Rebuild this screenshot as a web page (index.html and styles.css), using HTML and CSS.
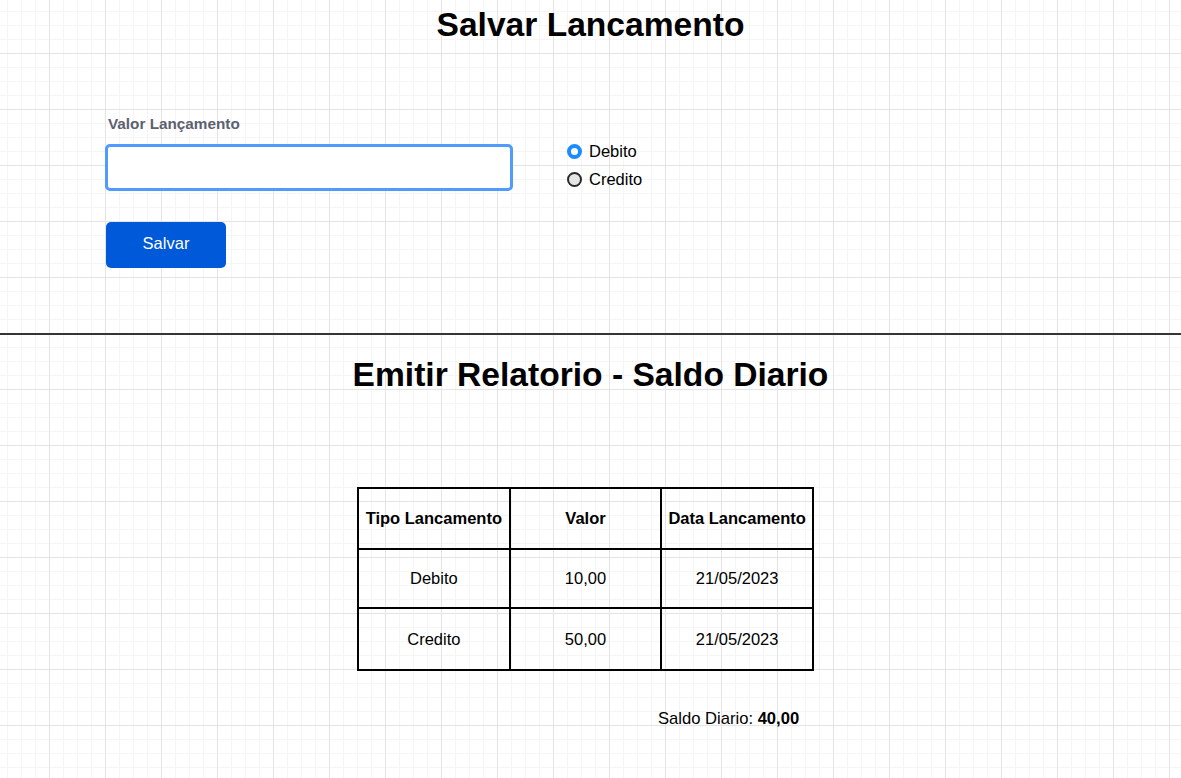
FILE: index.html
```html
<!DOCTYPE html>
<html lang="pt-BR">
<head>
<meta charset="utf-8">
<title>Lancamentos</title>
<link rel="stylesheet" href="styles.css">
</head>
<body>
<div class="page">
  <section class="save">
    <h1 class="title">Salvar Lancamento</h1>
    <div class="form-row">
      <div class="field">
        <label class="label" for="valor">Valor Lançamento</label>
        <input class="input" id="valor" type="text">
        <button class="btn" type="button">Salvar</button>
      </div>
      <div class="radios">
        <div class="radio-row"><span class="radio radio-on"></span><span class="radio-text">Debito</span></div>
        <div class="radio-row"><span class="radio"></span><span class="radio-text">Credito</span></div>
      </div>
    </div>
  </section>
  <hr class="divider">
  <section class="report">
    <h2 class="title title-2">Emitir Relatorio - Saldo Diario</h2>
    <table class="table">
      <thead>
        <tr class="row-head"><th>Tipo Lancamento</th><th>Valor</th><th>Data Lancamento</th></tr>
      </thead>
      <tbody>
        <tr class="row-1"><td>Debito</td><td>10,00</td><td>21/05/2023</td></tr>
        <tr class="row-2"><td>Credito</td><td>50,00</td><td>21/05/2023</td></tr>
      </tbody>
    </table>
    <p class="saldo">Saldo Diario: <strong>40,00</strong></p>
  </section>
</div>
</body>
</html>
```
FILE: styles.css
```css
html, body {
  margin: 0;
  padding: 0;
}
body {
  font-family: "Liberation Sans", Arial, sans-serif;
  color: #000;
  background-color: #fff;
  background-image:
    linear-gradient(to right, #e4e4e4 1px, transparent 1px),
    linear-gradient(to bottom, #e4e4e4 1px, transparent 1px),
    linear-gradient(to right, #f5f5f5 1px, transparent 1px),
    linear-gradient(to bottom, #f5f5f5 1px, transparent 1px);
  background-size: 56px 56px, 56px 56px, 14px 14px, 14px 14px;
  background-position: 49px 53px, 49px 53px, 7px 11px, 7px 11px;
}
.page {
  min-height: 778px;
}
.save {
  padding: 5px 0 65px;
}
.title {
  margin: 0;
  text-align: center;
  font-size: 33.6px;
  line-height: 40px;
  font-weight: bold;
}
.form-row {
  display: flex;
  margin: 70px 0 0 105px;
}
.field {
  display: flex;
  flex-direction: column;
  width: 408px;
}
.label {
  margin-left: 3px;
  font-size: 15.3px;
  line-height: 18px;
  font-weight: bold;
  color: #5c6170;
}
.input {
  margin-top: 11px;
  box-sizing: border-box;
  width: 408px;
  height: 47px;
  border: 3px solid #4f9bff;
  border-radius: 5px;
  background: #fff;
  outline: none;
  font-family: inherit;
  font-size: 16px;
  padding: 0 10px;
}
.btn {
  align-self: flex-start;
  margin: 31px 0 0 1px;
  padding: 0 0 3px;
  width: 120px;
  height: 46px;
  border: none;
  border-radius: 5px;
  background: #0059d8;
  color: #fff;
  font-family: inherit;
  font-size: 16.5px;
  cursor: pointer;
}
.radios {
  margin-left: 54px;
  padding-top: 22px;
  display: flex;
  flex-direction: column;
}
.radio-row {
  display: flex;
  align-items: center;
  height: 28px;
  gap: 7px;
  font-size: 16.5px;
}
.radio {
  box-sizing: border-box;
  width: 15px;
  height: 15px;
  border-radius: 50%;
  border: 2px solid #2a2a2a;
  background: #e6e6e6;
}
.radio-on {
  border: 4px solid #1b8cff;
  background: #fff;
}
.divider {
  margin: 0;
  height: 0;
  border: none;
  border-top: 2px solid #353535;
}
.title-2 {
  margin-top: 20px;
}
.table {
  margin: 92px 0 0 357px;
  width: 457px;
  table-layout: fixed;
  border-collapse: collapse;
  font-size: 16.5px;
}
.table th,
.table td {
  border: 2px solid #000;
  text-align: center;
  padding: 0;
}
.row-head {
  height: 61px;
}
.row-1 {
  height: 59px;
}
.row-2 {
  height: 62px;
}
.saldo {
  margin: 39px 0 0 658px;
  font-size: 16.6px;
  line-height: 18px;
}
```
